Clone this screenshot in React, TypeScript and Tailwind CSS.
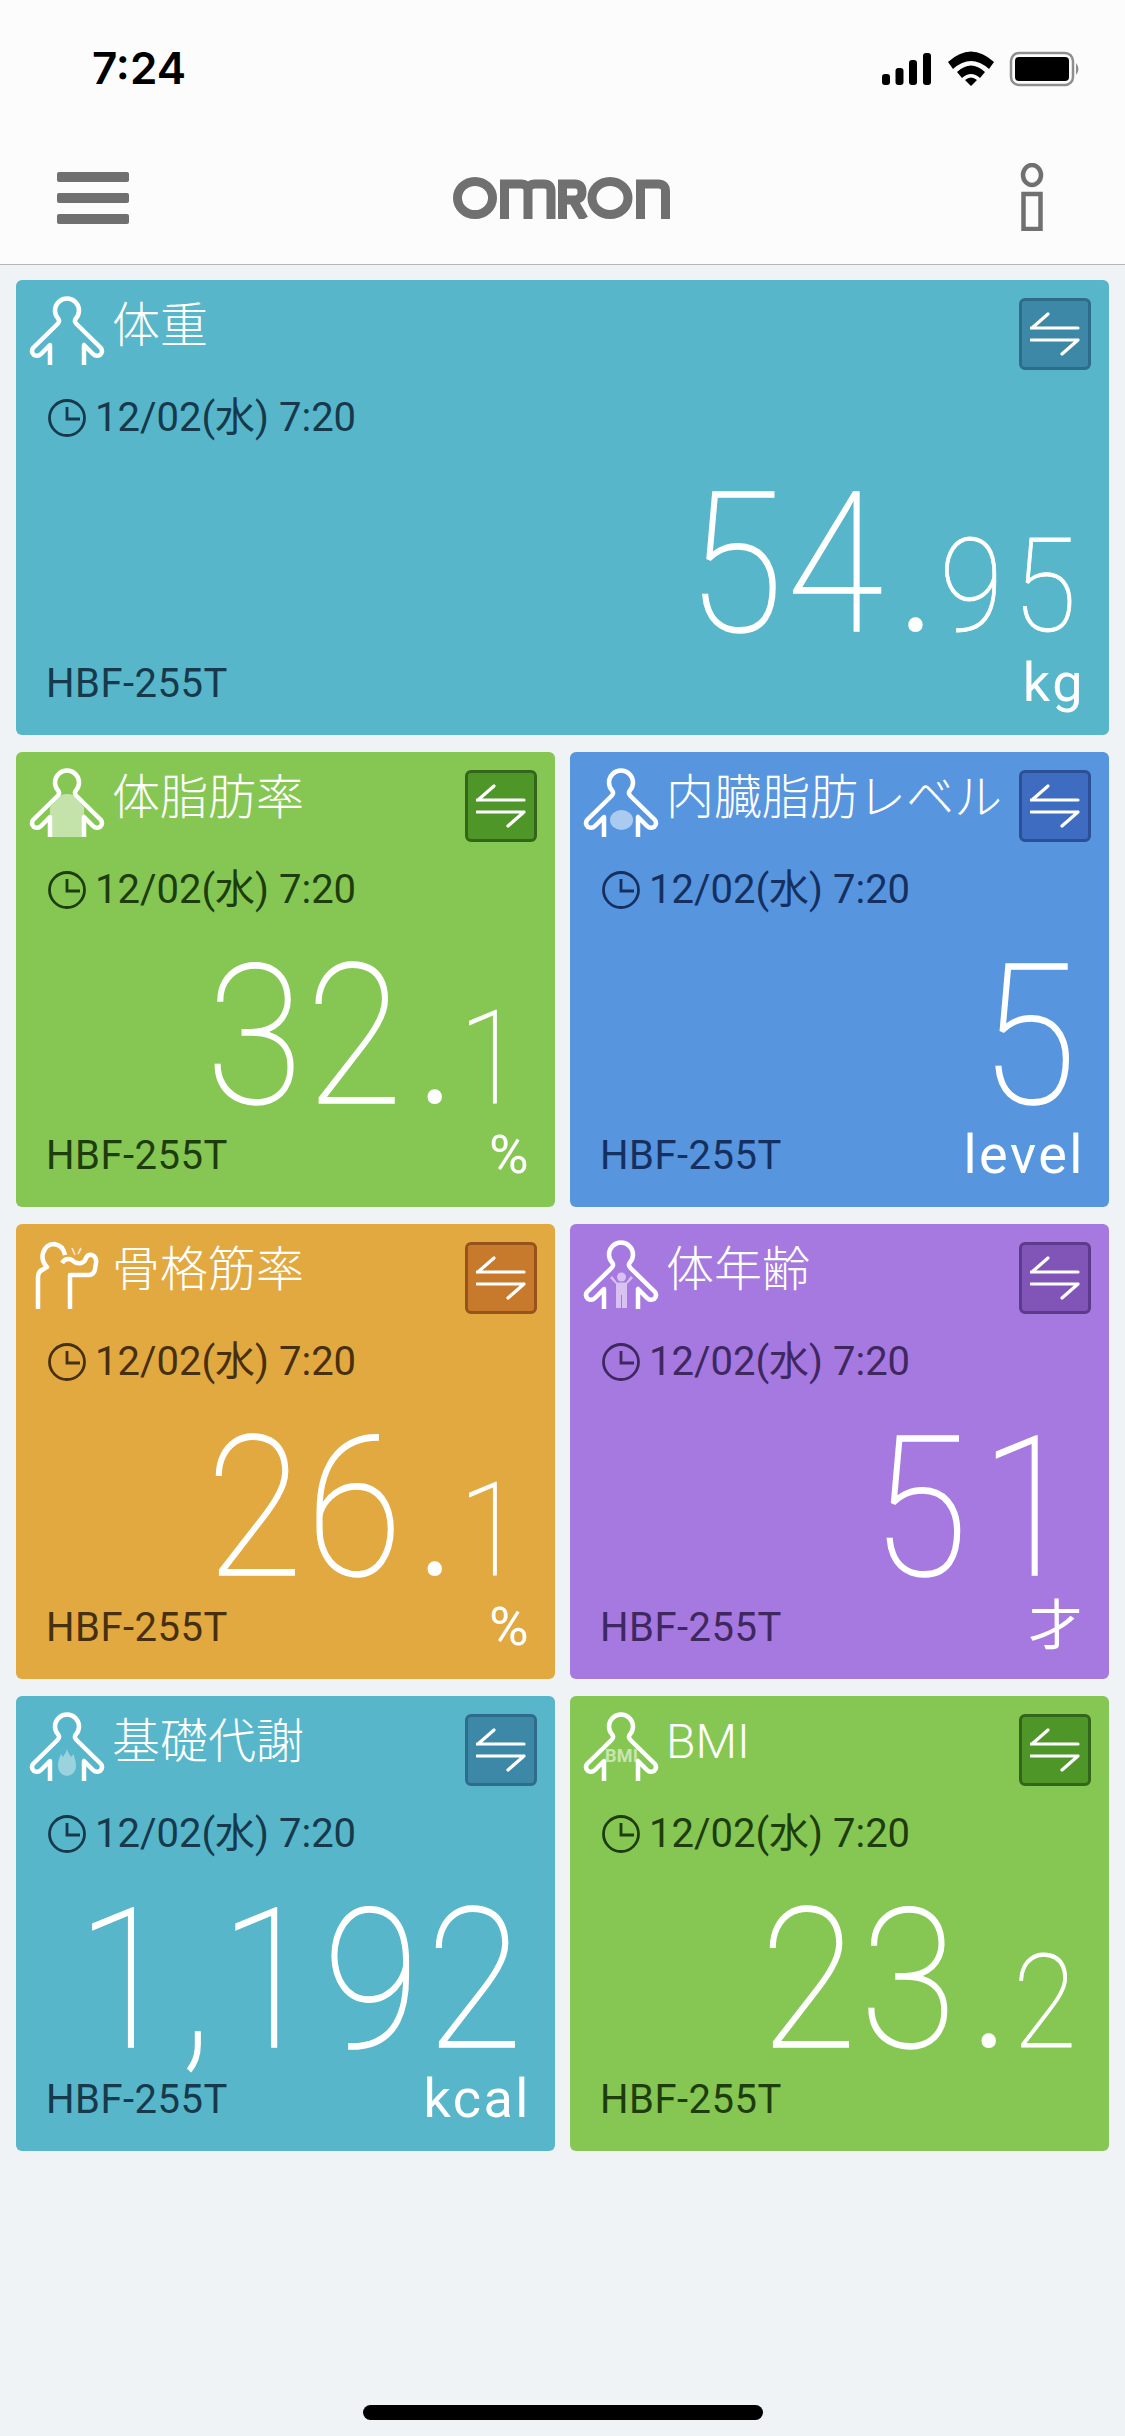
import React from "react";

const jp = "font-['Roboto','Noto_Sans_CJK_JP',sans-serif]";

function Body({ children }: { children?: React.ReactNode }) {
  return (
    <svg viewBox="0 0 100 90" className="absolute left-[10px] top-[1px] h-[90px] w-[100px]" fill="none">
      {children}
      <path
        d="M24 84 V64 L15 73 Q12 76 8 74 Q4.500 71 7 67 L31.500 43 Q34 40.500 32.500 38 A12 12 0 1 1 49.500 38 Q48 40.500 50.500 43 L75 67 Q77.500 71 74 74 Q70 76 67 73 L58 64 V84"
        stroke="white"
        strokeWidth="4.5"
        strokeLinejoin="round"
      />
    </svg>
  );
}

function Muscle() {
  return (
    <svg viewBox="0 0 100 90" className="absolute left-[4px] top-[1px] h-[90px] w-[100px]" fill="none" stroke="white">
      <path
        d="M18 84 V52 Q18 46 24 44 L27 42 Q21 36 23 28 Q26 19 34 19 Q43 20 45 30 M42 38 Q46 32 52 35 Q56 39 61 38 Q65 37 66 33 Q68 29 72 30 Q77 32 76 38 L75 44 Q74 50 69 50 L50 50 V84"
        strokeWidth="4.5"
        strokeLinejoin="round"
      />
      <path d="M52 23 L55 30 M61 23 L58 29" strokeWidth="1.8" opacity="0.7" />
    </svg>
  );
}

function Swap({ bg, border }: { bg: string; border: string }) {
  return (
    <div className={`absolute right-[18px] top-[18px] flex h-[72px] w-[72px] items-center justify-center rounded-[6px] border-[3px] ${bg} ${border}`}>
      <svg viewBox="0 0 50 44" className="h-[44px] w-[50px]" fill="none" stroke="white" strokeWidth="3.2" strokeLinecap="round">
        <path d="M1 16 H48 M2 16 L18 2 M1 28 H48 M48 28 L32 42" />
      </svg>
    </div>
  );
}

type CardProps = {
  title: string;
  int: string;
  dec?: string;
  unit: string;
  icon: React.ReactNode;
  bg: string;
  text: string;
  swapBg: string;
  swapBorder: string;
  wide?: boolean;
  intClass?: string;
};

function Card({ title, int, dec, unit, icon, bg, text, swapBg, swapBorder, wide, intClass = "tracking-[4px]" }: CardProps) {
  return (
    <div className={`relative flex h-[455px] flex-col rounded-[6px] ${bg} ${wide ? "col-span-2" : ""}`}>
      {icon}
      <Swap bg={swapBg} border={swapBorder} />
      <div className={`${jp} ml-[96px] mt-[18px] h-[56px] whitespace-nowrap text-[48px] font-light leading-[56px] text-white`}>{title}</div>
      <div className={`ml-[32px] mt-[36px] flex h-[56px] items-center gap-[9px] ${text}`}>
        <svg viewBox="0 0 38 38" className="h-[38px] w-[38px]" fill="none" stroke="currentColor" strokeWidth="2.800">
          <circle cx="19" cy="19" r="17.500" />
          <path d="M19 8 V20 H32" />
        </svg>
        <span className={`${jp} text-[40px]`}>12/02(水) 7:20</span>
      </div>
      <div className="mt-[24px] flex h-[183px] origin-right scale-x-90 items-baseline justify-end pr-[32px] font-['Roboto',sans-serif] font-thin text-white">
        <span className={`text-[195px] leading-[190px] [-webkit-text-stroke:1.5px_white] ${intClass}`}>{int}</span>
        {dec && (
          <>
            <span className="ml-[18px] text-[100px] font-bold leading-none">.</span>
            <span className="-mr-[7px] ml-[12px] text-[129px] leading-none tracking-[11px] [-webkit-text-stroke:0.8px_white]">{dec}</span>
          </>
        )}
      </div>
      <div className="flex items-end justify-between pl-[30px] pr-[24px] font-['Roboto',sans-serif]">
        <span className={`mb-[4px] text-[40px] leading-[50px] tracking-[0.5px] ${text}`}>HBF-255T</span>
        <span className={`${jp} min-h-[60px] text-[54px] leading-[60px] tracking-[2.5px] text-white`}>{unit}</span>
      </div>
    </div>
  );
}

export default function App() {
  const teal = { bg: "bg-[#57b6c9]", swapBg: "bg-[#3e88a7]", swapBorder: "border-[#2f6b8a]", text: "text-[#16394b]" };
  const green = { bg: "bg-[#86c754]", swapBg: "bg-[#4f9628]", swapBorder: "border-[#33661a]", text: "text-[#1e3d0d]" };
  const blue = { bg: "bg-[#5795df]", swapBg: "bg-[#3d6cc0]", swapBorder: "border-[#2c5096]", text: "text-[#15305f]" };
  const orange = { bg: "bg-[#e2a940]", swapBg: "bg-[#c77a2b]", swapBorder: "border-[#96541c]", text: "text-[#47300f]" };
  const purple = { bg: "bg-[#a679e0]", swapBg: "bg-[#8155b7]", swapBorder: "border-[#5d3a8c]", text: "text-[#3f2760]" };

  return (
    <div className="flex h-[2436px] w-[1125px] flex-col bg-[#eff3f6] font-['Roboto',sans-serif]">
      <div className="h-[265px] shrink-0 border-b border-b-[#b4b6b8] bg-[#fcfcfc]">
        <div className="relative h-[130px]">
          <span className="absolute left-[92px] top-[41px] font-['Inter',sans-serif] text-[44px] font-semibold leading-[54px] text-black">7:24</span>
          <svg viewBox="0 0 205 38" className="absolute left-[880px] top-[50px] h-[38px] w-[205px]">
            <rect x="2" y="24" width="8" height="11" rx="3" fill="black" />
            <rect x="15.500" y="18" width="8" height="17" rx="3" fill="black" />
            <rect x="29" y="10" width="8" height="25" rx="3" fill="black" />
            <rect x="43" y="3" width="8" height="32" rx="3" fill="black" />
            <path d="M68 12 Q91 -9 114 12 L109 19 Q91 3 73 19 Z M77 22 Q91 9 105 22 L100 28 Q91 20 82 28 Z M85 30 Q91 25 97 30 L91 36 Z" fill="black" />
            <rect x="131" y="3" width="62" height="32" rx="8" fill="none" stroke="#8e8e8e" strokeWidth="2.500" />
            <rect x="135" y="7" width="54" height="24" rx="4" fill="black" />
            <path d="M196 13 Q201 19 196 25 Z" fill="#8e8e8e" />
          </svg>
        </div>
        <div className="relative h-[134px]">
          <div className="absolute left-[57px] top-[42px] flex w-[72px] flex-col gap-[11px]">
            <div className="h-[10px] rounded-[2px] bg-[#707070]" />
            <div className="h-[10px] rounded-[2px] bg-[#707070]" />
            <div className="h-[10px] rounded-[2px] bg-[#707070]" />
          </div>
          <svg viewBox="0 0 217 42" className="absolute left-[453px] top-[47px] h-[42px] w-[217px]" fill="none" stroke="#707070" strokeWidth="9">
            <ellipse cx="22" cy="21" rx="17.500" ry="16.500" />
            <path d="M51.500 42 V7 H68 Q75 7 75 14 V42 M75 14 Q75 7 82 7 H91 Q98 7 98 14 V42" />
            <path d="M109.500 42 V7 H122 Q129 7 129 15 Q129 23 120 23 H114 M120 23 L131 42" />
            <ellipse cx="157" cy="21" rx="18" ry="16.500" />
            <path d="M187.500 42 V7 H205 Q212.500 7 212.500 14 V42" />
          </svg>
          <svg viewBox="0 0 24 68" className="absolute left-[1020px] top-[33px] h-[68px] w-[24px]" fill="none" stroke="#707070">
            <ellipse cx="12" cy="12" rx="9" ry="10" strokeWidth="4.500" />
            <rect x="3.500" y="31" width="17" height="35" strokeWidth="4.500" />
          </svg>
        </div>
      </div>

      <div className="grid grid-cols-2 gap-x-[15px] gap-y-[17px] px-[16px] pt-[15px]">
        <Card wide {...teal} title="体重" int="54" dec="95" unit="kg" icon={<Body />} />
        <Card {...green} title="体脂肪率" int="32" dec="1" unit="%" icon={
          <Body><path d="M35 42 Q41 40 47 42 L58 54 V84 H24 V54 Z" fill="white" opacity="0.5" /></Body>
        } />
        <Card {...blue} title="内臓脂肪レベル" int="5" unit="level" icon={
          <Body><ellipse cx="41.500" cy="67" rx="11.500" ry="10" fill="white" opacity="0.5" /></Body>
        } />
        <Card {...orange} title="骨格筋率" int="26" dec="1" unit="%" icon={<Muscle />} />
        <Card {...purple} title="体年齢" int="51" unit="才" intClass="-mr-[10px] tracking-[14px]" icon={
          <Body>
            <circle cx="41.500" cy="52" r="4.500" fill="white" opacity="0.55" />
            <path d="M30 53 L36 59 V83 H41 V70 H42 V83 H47 V59 L53 53 L51 51 L46 57.500 H37 L32 51 Z" fill="white" opacity="0.55" />
          </Body>
        } />
        <Card {...teal} title="基礎代謝" int="1,192" unit="kcal" intClass="-mr-[4px] tracking-[8px]" icon={
          <Body><path d="M41 52 C42 56 44 58 45 60 L47.500 57 C49 62 50 65 50 69 A9 10 0 0 1 32 69 C32 65 33 61 35 57 L37 60 C38 58 40 56 41 52 Z" fill="white" opacity="0.4" /></Body>
        } />
        <Card {...green} title="BMI" int="23" dec="2" unit="" icon={
          <Body><text x="41.500" y="65" textAnchor="middle" fontSize="18" fontWeight="700" fontFamily="Roboto" fill="white" opacity="0.55" textLength="33">BMI</text></Body>
        } />
      </div>

      <div className="mt-auto flex justify-center pb-[16px]">
        <div className="h-[15px] w-[400px] rounded-full bg-black" />
      </div>
    </div>
  );
}
